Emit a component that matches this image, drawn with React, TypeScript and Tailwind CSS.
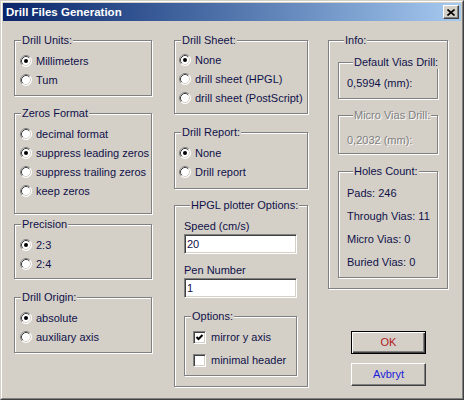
import React from 'react';

const BG = 'bg-[#d4d0c8]';

const Radio: React.FC<{ checked?: boolean }> = ({ checked }) => (
  <svg width="12" height="12" viewBox="0 0 12 12" className="shrink-0">
    <circle cx="6" cy="6" r="5.5" fill="#fff" />
    <path d="M2.11 9.89 A5.5 5.5 0 0 1 9.89 2.11" fill="none" stroke="#808080" strokeWidth="1" />
    <path d="M9.89 2.11 A5.5 5.5 0 0 1 2.11 9.89" fill="none" stroke="#ffffff" strokeWidth="1" />
    <path d="M2.82 9.18 A4.5 4.5 0 0 1 9.18 2.82" fill="none" stroke="#404040" strokeWidth="1" />
    <path d="M9.18 2.82 A4.5 4.5 0 0 1 2.82 9.18" fill="none" stroke="#d4d0c8" strokeWidth="1" />
    {checked && <circle cx="6" cy="6" r="2" fill="#000" />}
  </svg>
);

const Check: React.FC<{ checked?: boolean }> = ({ checked }) => (
  <div className="h-[13px] w-[13px] shrink-0 border border-t-[#808080] border-l-[#808080] border-r-white border-b-white bg-white shadow-[inset_1px_1px_0_#404040,inset_-1px_-1px_0_#d4d0c8]">
    {checked && (
      <svg width="11" height="11" viewBox="0 0 11 11">
        <path d="M2.5 5 L4.5 7 L8.5 3" fill="none" stroke="#000" strokeWidth="2" />
      </svg>
    )}
  </div>
);

const Group: React.FC<{ label: string; className?: string; disabled?: boolean; children: React.ReactNode }> = ({
  label,
  className = '',
  disabled,
  children,
}) => (
  <div className={`border border-[#808080] shadow-[inset_1px_1px_0_#fff,1px_1px_0_#fff] ${className}`}>
    <div
      className={`-mt-[7px] ml-[6px] w-fit whitespace-nowrap px-[1px] leading-[13px] ${BG} ${
        disabled ? 'text-[#808080] [text-shadow:1px_1px_0_#fff]' : ''
      }`}
    >
      {label}
    </div>
    {children}
  </div>
);

const RadioList: React.FC<{ items: string[]; selected: number; className?: string }> = ({ items, selected, className = '' }) => (
  <div className={`flex flex-col gap-[3px] ${className}`}>
    {items.map((t, i) => (
      <div key={t} className="flex h-[16px] items-center gap-[4px]">
        <Radio checked={i === selected} />
        <span className="leading-[13px] whitespace-nowrap">{t}</span>
      </div>
    ))}
  </div>
);

const Field: React.FC<{ value: string }> = ({ value }) => (
  <div className="mt-[1px] h-[20px] border border-t-[#808080] border-l-[#808080] border-r-white border-b-white bg-white pl-[2px] leading-[18px] shadow-[inset_1px_1px_0_#404040,inset_-1px_-1px_0_#d4d0c8]">
    {value}
  </div>
);

export default function App() {
  return (
    <div className="h-[400px] w-[464px] border border-t-[#d4d0c8] border-l-[#d4d0c8] border-r-[#404040] border-b-[#404040] bg-[#d4d0c8] font-['Liberation_Sans',Arial,sans-serif] text-[11px] text-[#101048]">
      <div className="h-full border border-t-white border-l-white border-r-[#808080] border-b-[#808080] p-[1px]">
        {/* title bar */}
        <div className="flex h-[18px] items-center bg-linear-to-r from-[#0a246a] to-[#a6caf0] pl-[3px] pr-[2px]">
          <span className="text-[11.5px] font-bold leading-[14px] text-white">Drill Files Generation</span>
          <div className="ml-auto flex h-[14px] w-[16px] items-center justify-center border border-t-white border-l-white border-r-[#404040] border-b-[#404040] bg-[#d4d0c8] shadow-[inset_-1px_-1px_0_#808080]">
            <svg width="8" height="7" viewBox="0 0 8 7">
              <path d="M0.5 0.5 L7.5 6.5 M7.5 0.5 L0.5 6.5" stroke="#000" strokeWidth="1.6" />
            </svg>
          </div>
        </div>

        <div className="flex items-start pl-[11px] pt-[19px]">
          {/* left column */}
          <div className="flex w-[138px] flex-col">
            <Group label="Drill Units:" className="pb-[7px]">
              <RadioList className="mt-[6px] pl-[5px]" items={['Millimeters', 'Tum']} selected={0} />
            </Group>
            <Group label="Zeros Format" className="mt-[17px] pb-[14px]">
              <RadioList
                className="mt-[6px] pl-[5px]"
                items={['decimal format', 'suppress leading zeros', 'suppress trailing zeros', 'keep zeros']}
                selected={1}
              />
            </Group>
            <Group label="Precision" className="mt-[10px] pb-[6px]">
              <RadioList className="mt-[6px] pl-[5px]" items={['2:3', '2:4']} selected={0} />
            </Group>
            <Group label="Drill Origin:" className="mt-[18px] pb-[7px]">
              <RadioList className="mt-[6px] pl-[5px]" items={['absolute', 'auxiliary axis']} selected={0} />
            </Group>
          </div>

          {/* middle column */}
          <div className="ml-[22px] flex w-[134px] flex-col">
            <Group label="Drill Sheet:" className="pb-[7px]">
              <RadioList
                className="mt-[5px] pl-[4px]"
                items={['None', 'drill sheet (HPGL)', 'drill sheet (PostScript)']}
                selected={0}
              />
            </Group>
            <Group label="Drill Report:" className="mt-[18px] pb-[8px]">
              <RadioList className="mt-[6px] pl-[4px]" items={['None', 'Drill report']} selected={0} />
            </Group>
            <Group label="HPGL plotter Options:" className="mt-[16px] pb-[10px] pl-[9px] pr-[10px]">
              <div className="mt-[8px] leading-[13px]">Speed (cm/s)</div>
              <Field value="20" />
              <div className="mt-[10px] leading-[13px]">Pen Number</div>
              <Field value="1" />
              <Group label="Options:" className="mt-[18px] pb-[7px]">
                <div className="mt-[6px] flex flex-col gap-[7px] pl-[8px]">
                  <div className="flex h-[16px] items-center gap-[5px]">
                    <Check checked />
                    <span className="leading-[13px]">mirror y axis</span>
                  </div>
                  <div className="flex h-[16px] items-center gap-[5px]">
                    <Check />
                    <span className="leading-[13px]">minimal header</span>
                  </div>
                </div>
              </Group>
            </Group>
          </div>

          {/* right column */}
          <div className="ml-[20px] flex w-[120px] flex-col">
            <Group label="Info:" className="px-[9px] pb-[10px]">
              <Group label="Default Vias Drill:" className="mt-[15px] pb-[8px] pl-[8px]">
                <div className="mt-[8px] leading-[13px]">0,5994 (mm):</div>
              </Group>
              <Group label="Micro Vias Drill:" disabled className="mt-[16px] pb-[6px] pl-[8px]">
                <div className="mt-[12px] leading-[13px] text-[#808080] [text-shadow:1px_1px_0_#fff]">0,2032 (mm):</div>
              </Group>
              <Group label="Holes Count:" className="mt-[17px] pb-[8px] pl-[8px]">
                <div className="mt-[9px] flex flex-col gap-[10px] leading-[13px]">
                  <div>Pads: 246</div>
                  <div>Through Vias: 11</div>
                  <div>Micro Vias: 0</div>
                  <div>Buried Vias: 0</div>
                </div>
              </Group>
            </Group>
            <button className="ml-[23px] mt-[42px] h-[23px] w-[75px] border border-black bg-[#d4d0c8] text-[11px] leading-[13px] text-[#b01818] shadow-[inset_1px_1px_0_#fff,inset_-1px_-1px_0_#404040,inset_-2px_-2px_0_#808080]">
              OK
            </button>
            <button className="ml-[23px] mt-[9px] h-[23px] w-[75px] border border-t-white border-l-white border-r-[#404040] border-b-[#404040] bg-[#d4d0c8] text-[11px] leading-[13px] text-[#1c1cd8] shadow-[inset_-1px_-1px_0_#808080]">
              Avbryt
            </button>
          </div>
        </div>
      </div>
    </div>
  );
}
